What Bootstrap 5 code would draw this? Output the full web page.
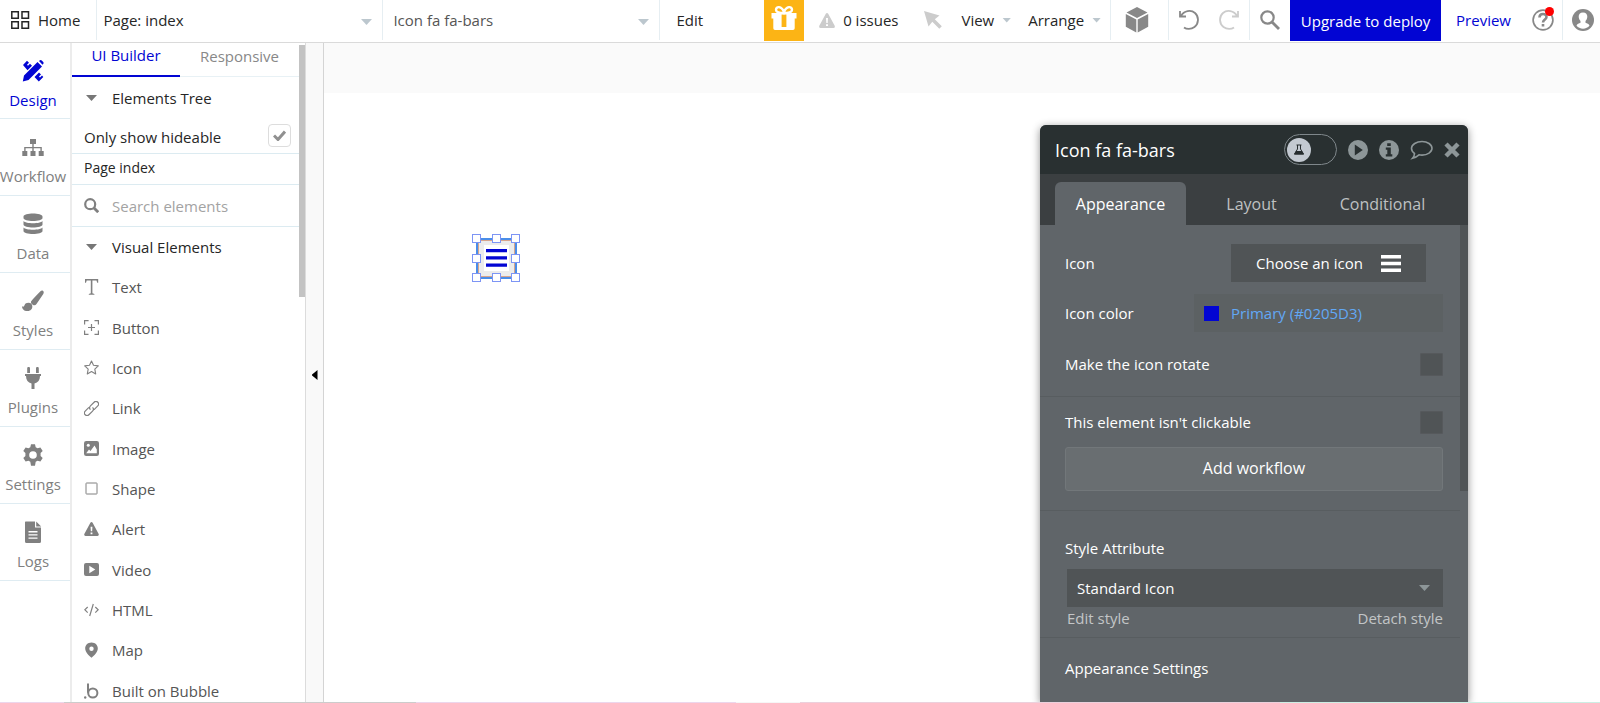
<!DOCTYPE html>
<html lang="en">
<head>
<meta charset="utf-8">
<meta name="viewport" content="width=device-width, initial-scale=1">
<title>Page: index</title>
<link href="https://cdn.jsdelivr.net/npm/bootstrap@5.3.0/dist/css/bootstrap.min.css" rel="stylesheet">
<style>
  body { font: 400 15px/22px "Open Sans", "Noto Sans", sans-serif; color: #262626; background: #fff; }
  button, input, select { font: inherit; color: inherit; }
  button { background: none; border: 0; padding: 0; }
  a { color: inherit; text-decoration: none; }
  svg { display: block; flex: none; fill: currentColor; }
  .stroked { fill: none; stroke: currentColor; }

  /* top bar */
  .topbar { height: 43px; border-bottom: 1px solid #dadada; padding-bottom: 2px; }
  .seg { border-right: 1px solid #e6eef2; }
  .picker { appearance: none; border: 0; border-right: 1px solid #e6eef2; border-radius: 0; outline: 0; padding: 0 10px 0 6px;
    background: #fff url("data:image/svg+xml,%3Csvg xmlns='http://www.w3.org/2000/svg' width='11' height='6'%3E%3Cpath d='M0 0h11L5.5 6z' fill='%23bcc7ce'/%3E%3C/svg%3E") no-repeat right 10px top 19px; }
  .page-picker { width: 286px; }
  .element-picker { width: 277px; padding-left: 10px; color: #555; }
  .caret { width: 9px; height: 5px; background: #bcc7ce; clip-path: polygon(0 0, 100% 0, 50% 100%); }
  .gift { width: 40px; background: #fcb415; color: #fff; }
  .issues { padding-left: 15px; }
  .pointer { padding: 0 18px 0 25px; }
  .arrange { padding: 0 9px 0 17px; }
  .parts { padding: 0 19px 0 14px; }
  .tool { padding: 0 10px; }
  .icon-grey { color: #888; }
  .icon-pale { color: #ccc; }
  .gift, .deploy { margin-bottom: -1px; }
  .deploy { width: 151px; background: #0205d3; color: #fff; }
  .preview { padding: 0 13px 0 15px; }
  .account { padding: 0 6px 0 9px; }
  .blue { color: #0205d3; }
  .alert-dot { position: absolute; top: -2px; right: 0; width: 9px; height: 9px; border-radius: 50%; background: #f00; }

  /* left rail */
  .rail { width: 72px; border-right: 2px solid #ececec; color: #808080; }
  .rail a { height: 77px; padding: 17px 4px 0 0; border-bottom: 1px solid #dfecf2; }
  .rail a:first-child { height: 76px; }
  .rail-label { margin-top: 7px; }

  /* builder panel */
  .builder { width: 234px; border-right: 1px solid #dcdcdc; }
  .builder-main { width: 227px; }
  .scroll-thumb { width: 6px; height: 252px; margin-top: 2px; background: #c3c3c3; }
  .builder-tabs { height: 34px; border-bottom: 1px solid #e8f1f5; }
  .builder-tabs button { height: 34px; padding-bottom: 8px; color: #888; }
  .builder-tabs .chosen { width: 108px; border-bottom: 2px solid #0205d3; color: #0205d3; }
  .ruled { border-bottom: 1px solid #dcebf1; }
  .inset { padding-left: 12px; padding-right: 8px; }
  .h-sm { height: 31px; }
  .h-md { height: 42px; }
  .hide-row { height: 35px; padding-bottom: 2px; }
  .page-row { font-size: 14px; padding-bottom: 2px; }
  .lead-icon { width: 15px; margin-right: 13px; color: #808080; }
  .fold { width: 11px; height: 6px; background: #777; clip-path: polygon(0 0, 100% 0, 50% 100%); margin: 0 2px; }
  .tick { appearance: none; width: 23px; height: 23px; border: 1px solid #ddd; border-radius: 4px; margin: 0;
    background: #fff url("data:image/svg+xml,%3Csvg xmlns='http://www.w3.org/2000/svg' width='13' height='11'%3E%3Cpath d='M1 5.5l4 4L12 1.500' fill='none' stroke='%23909090' stroke-width='3'/%3E%3C/svg%3E") no-repeat center; }
  .search-box { border: 0; outline: 0; padding: 0; width: 180px; }
  .search-box::placeholder { color: #a3a3a3; opacity: 1; }
  .palette-title { height: 40px; }
  .palette { margin-bottom: -9px; color: #555; }
  .gutter { width: 18px; background: #f9f9f9; border-right: 1px solid #d4d4d4; }
  .collapse-arrow { width: 6px; height: 10px; background: #000; clip-path: polygon(100% 0, 100% 100%, 0 50%); margin-top: 5px; }

  /* canvas */
  .canvas-top { height: 50px; background: #fafafa; }
  .selection { position: absolute; left: 153px; top: 196px; width: 39px; height: 39px; outline: 2px solid #4a8de8; outline-offset: -1px;
    box-shadow: inset 0 0 0 2px #d8a58c; background: #ececec; padding: 6px 7px; }
  .sheet { background: #fff; width: 25px; height: 26px; }
  .handle { position: absolute; width: 9px; height: 9px; border: 1px solid #7d95f5; background: #fff; margin: -5px; }
  .strip { height: 1px; background: linear-gradient(90deg, #ecd6ec 0 4%, #ccc 4% 26%, #ecd6ec 26% 46%, #f6f6f6 46% 50%, #ecd0dc 50% 80%, #cdeee4 80%); }

  /* property editor */
  .editor { position: absolute; right: 132px; top: 82px; bottom: 0; width: 428px; background: #606569; color: #fff;
    border-radius: 6px 6px 0 0; box-shadow: 0 2px 8px rgba(0,0,0,.45); overflow: hidden; }
  .editor-head { height: 49px; background: #293031; padding: 0 8px 0 15px; }
  .editor-title { font-size: 18px; }
  .tools { color: #8d9698; gap: 11px; }
  .beta { appearance: none; width: 53px; height: 31px; border: 1px solid #7f878b; border-radius: 16px; margin: 0;
    background: url("data:image/svg+xml,%3Csvg xmlns='http://www.w3.org/2000/svg' width='24' height='24'%3E%3Ccircle cx='12' cy='12' r='12' fill='%23c3c9d1'/%3E%3Cpath d='M9.5 7h5M10.500 7v4L7.500 16h9L13.500 11V7' fill='none' stroke='%23262c2e'/%3E%3Cpath d='M9 13h6l2 3.500H7z' fill='%23262c2e'/%3E%3C/svg%3E") no-repeat 2px center; }
  .editor-tabs { height: 51px; background: #3b3f41; padding: 8px 15px 0; }
  .editor-tabs button { width: 131px; color: #bfc1c2; font-size: 16px; }
  .editor-tabs .chosen { background: #606569; color: #fff; border-radius: 6px 6px 0 0; }
  .editor-body { padding-left: 25px; padding-right: 25px; }
  .editor-rule { border-top: 1px solid #585d60; margin: 0 -17px 0 -25px; opacity: 1; }
  .row-icon { padding-top: 19px; padding-bottom: 12px; }
  .row-color { height: 38px; }
  .row-rotate { height: 64px; }
  .row-click { height: 50px; }
  .choose { width: 195px; height: 38px; margin-right: 17px; gap: 18px; background: #505456; }
  .color-field { width: 249px; height: 38px; background: #5c6163; color: #62a8f5; padding-left: 10px; }
  .swatch { width: 15px; height: 15px; background: #0205d3; }
  .box { appearance: none; width: 23px; height: 23px; margin: 0; background: #505456; border: 1px solid #56595c; border-radius: 1px; }
  .add-flow { height: 44px; background: #696e71; border: 1px solid #72777a; border-radius: 3px; font-size: 16px; padding-bottom: 2px; }
  .rule-flow { margin-top: 19px; }
  .style-label { padding: 26px 0 10px; }
  .style-block { padding-left: 2px; }
  .rule-style { margin-top: 8px; }
  .settings-title { padding-top: 19px; }
  .style-picker { appearance: none; height: 38px; border: 0; border-radius: 0; padding: 0 10px;
    background: #505456 url("data:image/svg+xml,%3Csvg xmlns='http://www.w3.org/2000/svg' width='11' height='6'%3E%3Cpath d='M0 0h11L5.5 6z' fill='%238d9698'/%3E%3C/svg%3E") no-repeat right 13px center; }
  .muted { color: #c3c5c7; }
  .editor-thumb { position: absolute; right: 0; top: 100px; width: 8px; height: 266px; background: #505456; }
</style>
</head>
<body class="vh-100 d-flex flex-column overflow-hidden">

<header class="topbar d-flex flex-shrink-0">
  <a href="#" class="seg d-flex align-items-center pe-3">
    <svg class="stroked mx-2" width="22" height="18" viewBox="0 0 22 18" stroke-width="1.500"><path d="M3.800.8h6.500v6.400H3.800zM14 .8h6.500v6.400H14zM3.800 10.800h6.500v6.400H3.800zM14 10.800h6.500v6.400H14z"/></svg>
    Home
  </a>
  <select class="picker page-picker" aria-label="Page"><option>Page: index</option></select>
  <select class="picker element-picker" aria-label="Element"><option>Icon fa fa-bars</option></select>
  <button type="button" class="ps-3">Edit</button>

  <div class="d-flex ms-auto">
    <button type="button" class="gift d-flex justify-content-center pt-1" aria-label="Gifts">
      <svg width="28" height="28" viewBox="0 0 28 28"><path fill-rule="evenodd" d="M1.500 9h25v5.500h-1.800v9.800q0 1.700-1.700 1.700H5q-1.700 0-1.700-1.700v-9.800H1.500zM11.600 10.500v12.500h4.800V10.500z"/><path d="M14 9C10 9 6 8.500 6 5.700c0-3.500 5.500-4 8 2.300 2.500-6.300 8-5.800 8-2.300C22 8.500 18 9 14 9z" fill="none" stroke="currentColor" stroke-width="2.400"/></svg>
    </button>
    <button type="button" class="issues d-flex align-items-center gap-2">
      <svg class="icon-pale" width="16" height="15" viewBox="0 0 16 15"><path fill-rule="evenodd" d="M8 0q.7 0 1.200.8l6.500 12Q16.300 15 14.500 15h-13Q-.3 15 .3 12.800l6.500-12Q7.300 0 8 0zM7 5l.3 5h1.400L9 5zM7 11.200v1.800h2v-1.800z"/></svg>
      0 issues
    </button>
    <button type="button" class="pointer icon-pale" aria-label="Pointer">
      <svg width="20" height="20" viewBox="0 0 20 20"><path d="M1 1l15.500 4.500-4.700 3.800 7 7-2.500 2.500-7-7L5.500 16.500z"/></svg>
    </button>
    <button type="button" class="d-flex align-items-center gap-2">View <span class="caret"></span></button>
    <button type="button" class="arrange seg d-flex align-items-center gap-2">Arrange <span class="caret"></span></button>
    <button type="button" class="parts seg icon-grey" aria-label="Components">
      <svg width="24" height="26" viewBox="0 0 24 26"><path d="M12 0l10.500 5.500L12 11 1.500 5.500zM.8 7L11.300 12.500V25.500L.8 19.800zM23.200 7L12.700 12.500V25.500l10.500-5.700z"/></svg>
    </button>
    <div class="seg d-flex">
      <button type="button" class="tool icon-grey" aria-label="Undo"><svg class="stroked" width="20" height="22" viewBox="0 0 20 22" stroke-width="1.800"><path d="M1 2v5.500h6M2 7C5 1.500 12 .5 16 4c4.500 4 3.500 11-.5 14-3.500 2.700-8 2.300-10.500.5"/></svg></button>
      <button type="button" class="tool icon-pale" aria-label="Redo"><svg class="stroked" width="20" height="22" viewBox="0 0 20 22" stroke-width="1.800"><path d="M19 2v5.500h-6M18 7C15 1.500 8 .5 4 4-.5 8 .5 15 4.500 18c3.500 2.700 8 2.300 10.500.5"/></svg></button>
    </div>
    <button type="button" class="tool icon-grey" aria-label="Search"><svg class="stroked" width="20" height="20" viewBox="0 0 20 20" stroke-width="2.200"><circle cx="7.500" cy="7.500" r="6.200"/><path d="M12 12l7 7" stroke-width="2.800"/></svg></button>
    <button type="button" class="deploy">Upgrade to deploy</button>
    <a href="#" class="preview blue d-flex align-items-center">Preview</a>
    <button type="button" class="seg d-flex align-items-center px-2 icon-grey" aria-label="Help">
      <span class="position-relative"><svg class="stroked" width="22" height="22" viewBox="0 0 22 22"><circle cx="11" cy="11" r="9.900" stroke-width="1.700"/><path d="M7.500 8.500c0-4.500 7-4.500 7-.5 0 2.500-3.500 2.500-3.500 5.500M11 15v2.500" stroke-width="2.600"/></svg><span class="alert-dot"></span></span>
    </button>
    <button type="button" class="account icon-grey" aria-label="Account"><svg width="22" height="22" viewBox="0 0 22 22"><circle cx="11" cy="11" r="11"/><path fill="#fff" d="M11 3.500c3 0 4.500 2 4.300 4.500-.2 2-1 3.200-1.800 4v1.800c1.500.8 3.500 1.200 4 2.700-3 4.200-10 4.200-13 0 .5-1.500 2.500-1.900 4-2.700V12c-.8-.8-1.600-2-1.800-4C6.500 5.500 8 3.500 11 3.500z"/></svg></button>
  </div>
</header>

<div class="d-flex flex-grow-1 overflow-hidden">
  <nav class="rail d-flex flex-column flex-shrink-0">
    <a href="#" class="blue d-flex flex-column align-items-center">
      <svg width="22" height="22" viewBox="0 0 22 22"><path d="M15.500 2l4.500 4.500L6.500 20 .8 21.500 2 15.500zM17 1l1-.7q1-.6 2 .4l1 1q1 1 .3 2l-.8 1z"/><path d="M1 5l4-4.300 2 2-2 2 1 1 2-2 2 2-4.500 4.500zM12.500 17l4.500-4.500 2 2-2 2 1 1 2-2 1.300 1.500-4.500 4.500z"/></svg>
      <span class="rail-label">Design</span></a>
    <a href="#" class="d-flex flex-column align-items-center">
      <svg width="22" height="22" viewBox="0 0 22 22"><path d="M8 3h6v5H8zM.3 15h5v5h-5zM8.500 15h5v5h-5zM16.700 15h5v5h-5zM10.300 8h1.400v7h-1.400zM2.200 11h17.600v4h-1.400v-2.700H3.600V15H2.200z"/></svg>
      <span class="rail-label">Workflow</span></a>
    <a href="#" class="d-flex flex-column align-items-center">
      <svg width="20" height="22" viewBox="0 0 20 22"><path d="M.5 3.500c0-4 19-4 19 0V5c0 4-19 4-19 0zM.5 8c2 3 17 3 19 0v3.500c0 4-19 4-19 0zM.5 14.500c2 3 17 3 19 0V18c0 4-19 4-19 0z"/></svg>
      <span class="rail-label">Data</span></a>
    <a href="#" class="d-flex flex-column align-items-center">
      <svg width="22" height="22" viewBox="0 0 22 22"><path d="M20.500.5q2 1 .8 3.500l-6.800 10q-1.500 2-3.800.7-2.500-1.500-1.500-3.500 1-1.500 9-9.700 1.200-1.300 2.300-1zM6.300 12.800c3 0 4.200 2 4 4.200-.3 3.500-4 4.500-6.300 4-2.500-.4-4-2.500-4-4.800 1.500 1 2 .2 2.500-1 .7-1.700 2-2.400 3.800-2.400z"/></svg>
      <span class="rail-label">Styles</span></a>
    <a href="#" class="d-flex flex-column align-items-center">
      <svg width="18" height="22" viewBox="0 0 18 22"><path d="M3.200 1.300a1.400 1.400 0 012.800 0V6H3.200zM12 1.300a1.400 1.400 0 012.800 0V6H12zM1 7h16v2h-1c0 4-2 6.500-5.500 7.500V22h-3v-5.500C4 15.500 2 13 2 9H1z"/></svg>
      <span class="rail-label">Plugins</span></a>
    <a href="#" class="d-flex flex-column align-items-center">
      <svg width="22" height="22" viewBox="0 0 22 22"><path fill-rule="evenodd" d="M9 .3h4l.7 2.900 1.800 1 2.900-.8 2.300 3.500-2.100 2.200v2.800l2.100 2.200-2.300 3.500-2.900-.8-1.800 1-.7 3.900H9l-.7-3.900-1.800-1-2.900.8-2.300-3.500 2.100-2.200V9.100L1.300 6.900l2.300-3.500 2.900.8 1.800-1zM11 7.200a3.800 3.800 0 100 7.600 3.800 3.800 0 000-7.600z"/></svg>
      <span class="rail-label">Settings</span></a>
    <a href="#" class="d-flex flex-column align-items-center">
      <svg width="18" height="22" viewBox="0 0 18 22"><path fill-rule="evenodd" d="M1.500.5H11v6h6v14q0 1.500-1.500 1.500h-13Q1 22 1 20.500V1zM4.500 10v1.400h9V10zm0 3.200v1.400h9v-1.400zm0 3.200v1.400h9v-1.400zM12.200.5l5 5h-5z"/></svg>
      <span class="rail-label">Logs</span></a>
  </nav>

  <aside class="builder d-flex flex-shrink-0">
    <div class="builder-main d-flex flex-column">
      <div class="builder-tabs d-flex flex-shrink-0">
        <button type="button" class="chosen">UI Builder</button>
        <button type="button" class="flex-grow-1">Responsive</button>
      </div>
      <button type="button" class="inset h-md d-flex align-items-center flex-shrink-0"><span class="lead-icon"><span class="fold d-block"></span></span>Elements Tree</button>
      <div class="hide-row inset ruled d-flex align-items-center justify-content-between flex-shrink-0">
        <label for="hideable" class="pt-1">Only show hideable</label>
        <input type="checkbox" class="tick" id="hideable" checked>
      </div>
      <a href="#" class="page-row inset ruled h-sm d-flex align-items-center flex-shrink-0">Page index</a>
      <div class="inset ruled h-md d-flex align-items-center flex-shrink-0">
        <svg class="lead-icon stroked" width="15" height="15" viewBox="0 0 15 15" stroke-width="2.200"><circle cx="6.200" cy="6.200" r="5"/><path d="M10 10l4.200 4.200" stroke-width="2.800"/></svg>
        <input type="search" class="search-box" placeholder="Search elements" aria-label="Search elements">
      </div>
      <button type="button" class="palette-title inset d-flex align-items-center flex-shrink-0"><span class="lead-icon"><span class="fold d-block"></span></span>Visual Elements</button>
      <ul class="palette list-unstyled d-flex flex-column flex-grow-1">
        <li class="inset flex-fill d-flex align-items-center"><svg class="lead-icon" width="15" height="16" viewBox="0 0 15 16"><path d="M1 0h13.200v3.800h-1L12.500 1.500H8.400v12.800l2 .6v.8H4.800v-.8l2-.6V1.500H2.700L2 3.800H1z"/></svg>Text</li>
        <li class="inset flex-fill d-flex align-items-center"><svg class="lead-icon stroked" width="15" height="15" viewBox="0 0 15 15" stroke-width="1.200"><path d="M.6 4.500V.6h4M10.500.6h3.900v3.900M14.400 10.500v3.900h-3.900M4.500 14.400H.6v-3.900M7.500 4v7M4 7.500h7"/></svg>Button</li>
        <li class="inset flex-fill d-flex align-items-center"><svg class="lead-icon stroked" width="15" height="15" viewBox="0 0 15 15" stroke-width="1.100"><path stroke-linejoin="round" d="M7.500 1l2 4.300 4.800.6-3.500 3.300.9 4.700-4.200-2.300-4.200 2.300.9-4.700L.7 5.900l4.800-.6z"/></svg>Icon</li>
        <li class="inset flex-fill d-flex align-items-center"><svg class="lead-icon stroked" width="15" height="15" viewBox="0 0 15 15" stroke-width="1.200"><g transform="rotate(-45 7.500 7.500)"><path d="M9 7.500a2.600 2.600 0 01-2.600 2.600H1.200a2.600 2.600 0 010-5.200h5.200M6 7.500a2.600 2.600 0 012.600-2.600h5.200a2.600 2.600 0 010 5.200H8.600"/></g></svg>Link</li>
        <li class="inset flex-fill d-flex align-items-center"><svg class="lead-icon" width="15" height="15" viewBox="0 0 15 15"><rect width="15" height="15" rx="2.200"/><path fill="#fff" d="M2.200 12.200L5 8.500l1.500 1.500L10.500 4.500l2.300 4v3.700z"/><circle cx="4.300" cy="4.300" r="1.500" fill="#fff"/></svg>Image</li>
        <li class="inset flex-fill d-flex align-items-center"><svg class="lead-icon stroked" width="15" height="15" viewBox="0 0 15 15"><rect x="2" y="2" width="11" height="11" rx=".5"/></svg>Shape</li>
        <li class="inset flex-fill d-flex align-items-center"><svg class="lead-icon" width="15" height="14" viewBox="0 0 16 15"><path fill-rule="evenodd" d="M8 0q.7 0 1.200.8l6.500 12Q16.300 15 14.500 15h-13Q-.3 15 .3 12.800l6.500-12Q7.300 0 8 0zM7 5l.3 5h1.400L9 5zM7 11.200v1.800h2v-1.800z"/></svg>Alert</li>
        <li class="inset flex-fill d-flex align-items-center"><svg class="lead-icon" width="15" height="13" viewBox="0 0 15 13"><path fill-rule="evenodd" d="M2 0h11q2 0 2 2v9q0 2-2 2H2q-2 0-2-2V2q0-2 2-2zm3.300 2.700v7.600l6-3.800z"/></svg>Video</li>
        <li class="inset flex-fill d-flex align-items-center"><svg class="lead-icon stroked" width="15" height="14" viewBox="0 0 15 14" stroke-width="1.200"><path d="M3.700 4L.8 6.800l2.900 2.800M11.300 4l2.900 2.800-2.900 2.800M9.300 1L5.700 13"/></svg>HTML</li>
        <li class="inset flex-fill d-flex align-items-center"><svg class="lead-icon" width="15" height="16" viewBox="0 0 15 16"><path fill-rule="evenodd" d="M7.500.5c4 0 6.300 2.800 6.300 6 0 3.500-3.300 6.800-6.300 9.300-3-2.500-6.300-5.800-6.300-9.300 0-3.200 2.300-6 6.300-6zm0 4a2.200 2.200 0 100 4.400 2.200 2.200 0 000-4.400z"/></svg>Map</li>
        <li class="inset flex-fill d-flex align-items-center"><svg class="lead-icon stroked" width="15" height="16" viewBox="0 0 15 16" stroke-width="2"><path d="M4 .5v9.300"/><circle cx="8.800" cy="10" r="4.600"/><circle cx="1.200" cy="14.500" r="1.200" fill="currentColor" stroke="none"/></svg>Built on Bubble</li>
      </ul>
    </div>
    <div class="scroll-thumb"></div>
  </aside>
  <button type="button" class="gutter d-flex align-items-center justify-content-center flex-shrink-0" aria-label="Collapse panel"><span class="collapse-arrow"></span></button>

  <main class="flex-grow-1 position-relative">
    <div class="canvas-top"></div>
    <div class="selection">
      <div class="sheet"><svg class="blue" width="25" height="26" viewBox="0 0 25 26"><path d="M2 4h21v3.300H2zM2 11.200h21v3.300H2zM2 18.500h21v3.300H2z"/></svg></div>
      <span class="handle start-0 top-0"></span><span class="handle start-50 top-0"></span><span class="handle start-100 top-0"></span>
      <span class="handle start-0 top-50"></span><span class="handle start-100 top-50"></span>
      <span class="handle start-0 top-100"></span><span class="handle start-50 top-100"></span><span class="handle start-100 top-100"></span>
    </div>

    <section class="editor">
      <div class="editor-head d-flex align-items-center justify-content-between">
        <span class="editor-title">Icon fa fa-bars</span>
        <div class="tools d-flex align-items-center">
          <input type="checkbox" role="switch" class="beta" aria-label="Experimental">
          <button type="button" aria-label="Play"><svg width="20" height="20" viewBox="0 0 20 20"><path fill-rule="evenodd" d="M10 0a10 10 0 100 20 10 10 0 000-20zM6.800 4.500l8 5.500-8 5.500z"/></svg></button>
          <button type="button" aria-label="Info"><svg width="20" height="20" viewBox="0 0 20 20"><circle cx="10" cy="10" r="10"/><path fill="#293031" d="M8.200 3.200h3.600V6H8.200zM6.800 7.500h5v6.700h1.500v2.300H6.800v-2.300h1.500V9.800H6.800z"/></svg></button>
          <button type="button" aria-label="Comment"><svg class="stroked" width="23" height="20" viewBox="0 0 23 20" stroke-width="1.600"><path d="M12 1.500c5.500 0 10 3 10 6.800s-4.500 6.800-10 6.800q-1.500 0-3-.3Q6 17.500 2.500 18.300q2-2.300 2-4.800C2.800 12.300 1.500 10.500 1.500 8.300c0-3.800 5-6.800 10.500-6.800z"/></svg></button>
          <button type="button" aria-label="Close"><svg class="stroked" width="16" height="16" viewBox="0 0 16 16" stroke-width="4.500"><path d="M2 2l12 12M14 2L2 14"/></svg></button>
        </div>
      </div>
      <div class="editor-tabs d-flex">
        <button type="button" class="chosen">Appearance</button>
        <button type="button">Layout</button>
        <button type="button">Conditional</button>
      </div>
      <div class="editor-body">
        <div class="row-icon d-flex align-items-center justify-content-between">
          <span>Icon</span>
          <button type="button" class="choose d-flex align-items-center justify-content-center">Choose an icon <svg width="20" height="17" viewBox="0 0 20 17"><path d="M0 0h20v3.500H0zM0 6.700h20v3.500H0zM0 13.400h20v3.500H0z"/></svg></button>
        </div>
        <div class="row-color d-flex align-items-center justify-content-between">
          <span>Icon color</span>
          <button type="button" class="color-field d-flex align-items-center"><span class="swatch me-2"></span><span class="ps-1">Primary (#0205D3)</span></button>
        </div>
        <div class="row-rotate d-flex align-items-center justify-content-between">
          <label for="rotate">Make the icon rotate</label><input type="checkbox" class="box" id="rotate">
        </div>
        <hr class="editor-rule">
        <div class="row-click d-flex align-items-center justify-content-between">
          <label for="clickable">This element isn't clickable</label><input type="checkbox" class="box" id="clickable">
        </div>
        <button type="button" class="add-flow w-100">Add workflow</button>
        <hr class="editor-rule rule-flow">
        <label for="style" class="style-label d-block">Style Attribute</label>
        <div class="style-block">
          <select class="style-picker w-100 d-block" id="style"><option>Standard Icon</option></select>
          <div class="d-flex justify-content-between muted"><a href="#">Edit style</a><a href="#">Detach style</a></div>
        </div>
        <hr class="editor-rule rule-style">
        <div class="settings-title">Appearance Settings</div>
      </div>
      <div class="editor-thumb"></div>
    </section>
  </main>
</div>
<div class="strip flex-shrink-0"></div>
</body>
</html>
